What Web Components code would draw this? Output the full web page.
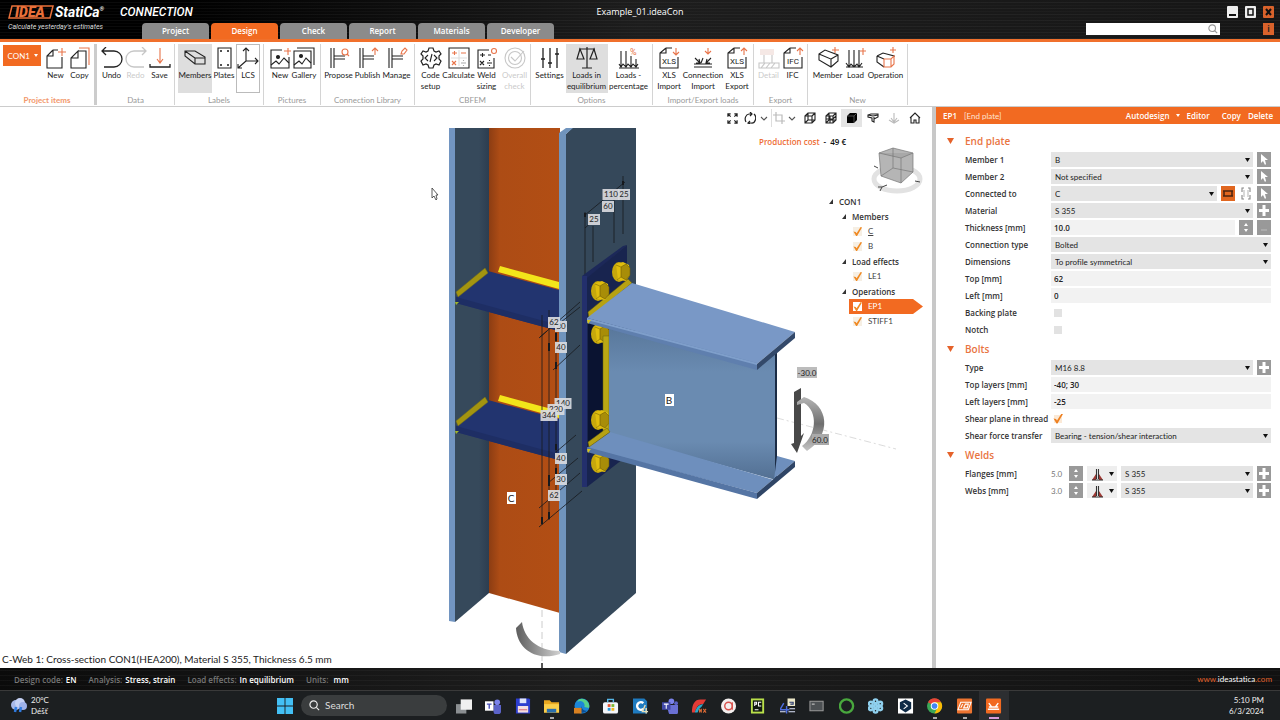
<!DOCTYPE html>
<html lang="en">
<head>
<meta charset="utf-8">
<title>Example_01.ideaCon</title>
<style>
html,body{margin:0;height:100%}
body{font-family:"Open Sans","Noto Sans",sans-serif;font-size:8px;color:#222;background:#fff;font-variant-ligatures:none;--light:Lato,"Open Sans",sans-serif}
</style>
</head>
<body>
<idea-app></idea-app>
<script>
const svg=(name,w,h=w,box=`0 0 ${w} ${h}`)=>`<svg width="${w}" height="${h}" viewBox="${box}" fill="none" stroke="currentColor" stroke-width="1.1" aria-hidden="true">${ICONS[name]||''}</svg>`;
const O='#e8744a';
const box3='<path d="M2 7L8 3L21 8V14L14 20L2 13ZM2 7L14 12V20M14 12L21 8"/>';
const sec='<path d="M3 1V21M6 1V21M6 9H17M6 12H17"/>';
const xls=`<path d="M8 1H14M8 1L2 6V21H20V10M8 1V6H2"/><text x="11" y="17" text-anchor="middle" font-size="8" fill="currentColor" stroke="none" font-family="Roboto">`;
const load='<path d="M4 3V19M9 3V19M14 3V19M1 16L4 20L6 17L9 20L12 17L14 20L17 16M1 20H18"/>';
const ICONS={
 new:`<path d="M8 3H13M8 3L2 9V21H17V10M8 3V9H2"/><path stroke="${O}" d="M17 1V9M13 5H21"/>`,
 copy:`<path d="M9 4H17V21H2V11L9 4V11H2"/><path stroke="${O}" d="M10 1H20V18"/>`,
 undo:'<path d="M1 4H13A8 8 0 0 1 13 20H3M5 0L1 4L5 8" stroke-width="1.3"/>',
 redo:'<path d="M21 4H9A8 8 0 0 0 9 20H19M17 0L21 4L17 8" stroke-width="1.3"/>',
 save:`<path d="M1 17V20H21V17" stroke-width="1.3"/><path stroke="${O}" d="M11 1V15M8 12L11 16L14 12"/>`,
 members:'<path d="M1 4H11L21 10V17H11L1 9ZM1 4L11 11V17M11 11H21"/>',
 plates:'<path d="M5 1H18V21H5Z"/><path d="M7 4H9M14 4H16M7 18H9M14 18H16M8 3V5M15 3V5M8 17V19M15 17V19"/>',
 lcs:'<path d="M9 14V1M9 14H21M9 14L1 21M6 4L9 1L12 4M18 11L21 14L18 17M1 17V21H5"/>',
 picnew:`<path d="M13 3H2V21H20V10"/><circle cx="9" cy="10" r="1.5" fill="currentColor"/><path d="M2 18L7 14L10 17L15 11L20 16"/><path stroke="${O}" d="M19 1V8M15 4H22"/>`,
 gallery:'<path d="M1 4H18V21H1ZM4 1H21V18"/><circle cx="8" cy="9" r="1.5" fill="currentColor"/><path d="M1 18L6 14L9 17L13 11L18 16"/>',
 propose:sec+`<circle cx="17" cy="5" r="3" stroke="${O}"/><path stroke="${O}" d="M19 7L21 9"/>`,
 publish:sec+`<path stroke="${O}" d="M18 8V1M15 4L18 1L21 4"/>`,
 manage:sec+`<path stroke="${O}" d="M15 7L16 4L19 1L21 3L18 7Z"/>`,
 gear:'<path stroke-width="1.2" d="M9 1H13L14 4L16 5L19 4L21 7L19 9V12L21 14L19 18L16 17L14 18L13 21H9L8 18L6 17L3 18L1 14L3 12V9L1 7L3 4L6 5L8 4Z"/><path d="M8 8L5 11L8 14M14 8L17 11L14 14M12 7L10 15"/>',
 calc:`<path d="M1 1H21V21H1Z"/><path stroke="${O}" d="M4 6H9M6.500 4V8M13 6H18M4 14L8 18M8 14L4 18"/><path stroke="#aaa" d="M13 16H18M15.500 13V14M15.500 18V19"/><path stroke="#ddd" d="M11 3V19M3 11H19"/>`,
 weld:`<path d="M13 3H2V21H18V11"/><path d="M4 8H9M6.500 6V10M12 8H15M4 14L8 18M8 14L4 18M11 16H16M13.500 13V14M13.500 18V19"/><circle cx="18" cy="4" r="2.500" stroke="${O}"/>`,
 overall:'<circle cx="11" cy="11" r="10"/><circle cx="11" cy="11" r="6.500"/><path d="M7 10L11 14L20 4"/>',
 sliders:'<path d="M4 1V21M11 1V21M18 1V21" stroke-width="1.3"/><path d="M2 12H6M9 16H13M16 7H20" stroke-width="1.5"/>',
 scales:'<path d="M11 0V21M6 21H16M3 2H19M4 2L1 12H8ZM18 2L14 12H21Z" stroke-width="1.2"/>',
 percent:`<path d="M3 4V19M8 4V19M13 9V19M18 12V19M1 17L3 20L5 17L8 20L10 17L13 20L15 17L18 20L20 17M1 21H21"/><text x="12" y="8" font-size="9" fill="${O}" stroke="none" font-family="Roboto">%</text>`,
 xlsin:xls+`XLS</text><path stroke="${O}" d="M18 1V8M15 5L18 8L21 5"/>`,
 xlsout:xls+`XLS</text><path stroke="${O}" d="M18 8V1M15 4L18 1L21 4"/>`,
 ifc:xls+`IFC</text><path stroke="${O}" d="M18 8V1M15 4L18 1L21 4"/>`,
 conn:`<path d="M2 17H20M2 20H20M3 11L8 16M19 11L14 16M11 11L9 16M7 12L8 16H4M15 12L14 16H18"/><path stroke="${O}" d="M16 1V7M13 4L16 7L19 4"/>`,
 detail:'<path fill="#d9a79a" stroke="none" d="M2 2H16V8H2Z"/><path d="M6 8V16M14 8V16M1 16H21V21H1ZM3 21L7 16M8 21L12 16M13 21L17 16"/>',
 member:box3+`<path stroke="${O}" d="M18 0V6M15 3H22"/>`,
 load:load+`<path stroke="${O}" d="M18 1V8M15 4H21"/>`,
 operation:`<path d="M2 9L8 6L19 9V10M2 9V15L9 20M2 9L9 12"/><path stroke="${O}" d="M9 12H16L19 9V17L16 20H9ZM16 12V20M18 0V6M15 3H21"/>`,
 expand:'<path stroke-width="1.300" d="M1 4V1H4M8 1H11V4M11 8V11H8M4 11H1V8M1 1L4 4M11 1L8 4M11 11L8 8M1 11L4 8"/>',
 rotate:'<path stroke-width="1.200" d="M2 10A4 5 0 0 1 5 2H8M6 0L8 2L6 4M10 2A4 5 0 0 1 7 11H4M6 9L4 11L6 12"/>',
 chev:'<path stroke="#555" d="M3 5L6 8L9 5"/>',
 crop:'<path stroke-width="1.200" d="M3 0V9H12M0 3H9V12"/>',
 wire:'<path d="M1 4L4 1H11V8L8 11H1ZM1 4H8V11M8 4L11 1M4 1V8L1 11M4 8H11"/>',
 wire2:'<path d="M1 4L4 1H11V8L8 11H1ZM1 4H8V11M8 4L11 1M4 1V8L1 11M4 8H11M1 7L8 7L11 4M5 4V11"/>',
 solid:'<path fill="#000" stroke="none" d="M1 4L4 1H11V8L8 11H1Z"/><path stroke="#999" stroke-width=".5" d="M1 4H8V11M8 4L11 1"/>',
 beam:'<path d="M1 3L4 2H11V5L7 7V10L5 9V6L1 5ZM1 3L6 4L11 3M7 7V5"/>',
 ghost:'<path d="M6 1V10M3 6L6 10L9 6M1 8L6 11L11 8"/>',
 home:'<path d="M1 6L6 1L11 6M2 5V11H5V8H7V11H10V5"/>',
 pick:'<rect width="14" height="15" fill="#999" stroke="none"/><path fill="#fff" stroke="none" d="M4 2V11L6 9L8 13L9 12L8 8H11Z"/>',
 plus:'<rect width="14" height="15" fill="#999" stroke="none"/><path stroke="#fff" stroke-width="3" d="M7 2V13M2 7.500H12"/>',
 spin:'<rect width="14" height="15" fill="#999" stroke="none"/><path fill="#fff" stroke="none" d="M7 3L9 6H5ZM7 12L9 9H5Z"/>',
 minus:'<rect width="14" height="15" fill="#999" stroke="none"/><path stroke="#bbb" d="M4 10H10"/>',
 flat:'<rect width="14" height="15" fill="#e0661f" stroke="none"/><path stroke="#4a2410" stroke-width="1.500" d="M2 5H12M2 10H12M3 5V10M11 5V10"/>',
 tall:'<path stroke="#888" d="M5 2H3V6M3 9V13H5M9 2H11V6M11 9V13H9"/><path stroke="#bbb" d="M5 4V11M9 4V11"/>',
 fillet:'<path fill="#a03a35" stroke="none" d="M1 13L5 7V13ZM12 13L8 7V13Z"/><path stroke="#333" d="M5.500 2V12M7.500 2V12M1 13H12"/>',
 tri:'<path fill="#111" stroke="none" d="M0 0H5L2.500 4Z"/>',
 win:'<g stroke="none" fill="#43c0f5"><path d="M0 0H8V8H0ZM9 0H17V8H9ZM0 9H8V17H0ZM9 9H17V17H9Z"/></g>',
 lens:'<circle cx="5" cy="5" r="4" stroke-width="1.300"/><path stroke-width="1.300" d="M8 8L11 11"/>',
 rain:'<g stroke="none"><circle cx="6" cy="8" r="5" fill="#a9b9e8"/><circle cx="10" cy="6" r="5" fill="#c6d2f5"/><circle cx="13" cy="9" r="4" fill="#9fb2ea"/></g><path stroke="#2f7be0" stroke-width="2.500" d="M6 10L5 15M11 10L10 15"/>',
 view:'<path stroke="none" fill="#8b8f92" d="M0 6H11V16H0Z"/><path stroke="none" fill="#f0f0f0" d="M5 1H17V12H5Z"/>',
 teams:'<g stroke="none"><circle cx="13" cy="4" r="3" fill="#7b83eb"/><path fill="#5b63c8" d="M9 7H17V12A4 4 0 0 1 9 14Z"/><path fill="#fff" d="M0 3H9V13H0Z"/></g><path stroke="#4b53bc" stroke-width="1.500" d="M2 6H7M4.500 6V11"/>',
 floppy:'<g stroke="none"><path fill="#2d3ecf" d="M1 0H15L16 1V16H1Z"/><path fill="#dfe4fa" d="M5 0H12V5H5Z"/><path fill="#f4dfe2" d="M3 8H14V15H3Z"/></g><path stroke="#d56a7a" d="M4 12H13"/>',
 folder:'<g stroke="none"><path fill="#e9a820" d="M0 2H6L8 4H16V15H0Z"/><path fill="#fbcf4b" d="M0 6H16V15H0Z"/><path fill="#2a6fae" d="M3 11H13V15H3Z"/></g>',
 edge:'<g stroke="none"><circle cx="8.500" cy="8" r="8" fill="#1c86d8"/><path fill="#55d08c" d="M5 1A8 8 0 0 1 16 10L11 9A4 4 0 0 0 2 6Z"/><path fill="#0c4d92" d="M8 8A5 5 0 0 0 14 13A8 8 0 0 1 7 15Z"/><path fill="#d98121" d="M0 10H8V16H0Z"/></g>',
 store:'<rect x="0" y="4" width="16" height="12" rx="2" fill="#f3f6fa" stroke="none"/><path stroke="#57b7e8" stroke-width="1.500" d="M5 4V1H11V4"/><g stroke="none"><path fill="#e9532f" d="M5 6H8V9H5Z"/><path fill="#7db82e" d="M9 6H12V9H9Z"/><path fill="#2698dc" d="M5 10H8V13H5Z"/><path fill="#f3b51b" d="M9 10H12V13H9Z"/></g>',
 cc:'<path stroke="none" fill="#1f7bc0" d="M0 0H12L15 3V16H0Z"/><path stroke="#fff" stroke-width="2.500" d="M11 5A4 4 0 1 0 11 11"/><path stroke="#e4ddb8" stroke-width="1.500" d="M13 7L10 14H16M14 10V16"/>',
 teams2:'<g stroke="none"><circle cx="10" cy="3" r="3" fill="#7b83eb"/><circle cx="15" cy="5" r="2" fill="#5b63c8"/><path fill="#6a70d4" d="M5 7H17V12A5 5 0 0 1 7 15Z"/><path fill="#4048a8" d="M0 4H9V12H0Z"/></g><path stroke="#fff" d="M2 6H7M4.500 6V11"/>',
 rx:'<path fill="#e33b36" stroke="none" d="M1 15C1 6 4 1 10 1H16L13 6C8 6 6 9 4 15Z"/><path fill="#2ba9c9" stroke="none" d="M4 15C6 9 8 7 13 6L11 9C9 10 8 12 7 15Z"/><path stroke="#d96a35" d="M9 11V15M9 11L11 15V11M13 11L16 15M16 11L13 15"/>',
 aa:'<circle cx="8" cy="8" r="8" fill="#f3efee" stroke="none"/><circle cx="8" cy="8" r="4" stroke="#d8504b" stroke-width="1.500"/><path stroke="#d8504b" stroke-width="1.300" d="M12 4V12"/>',
 pc:'<path stroke="none" fill="#b9e04b" d="M1 0H15V16H1Z"/><path stroke="none" fill="#10180f" d="M3 2H13V14H3Z"/><path stroke="#fff" d="M5 8V4H7V6H5M12 4H9V8H12M5 12H9"/>',
 num:'<path stroke="none" fill="#ece8c8" d="M8 0H16V8H8Z"/><path stroke="#4d6de0" stroke-width="1.500" d="M4 5L0 12H10M7 8V16"/><path stroke="#dfe8ff" d="M0 14H6M9 14H16M10 11H16"/><path stroke="#26356f" d="M10 4H14V6H11"/>',
 term:'<path stroke="#9a9a9a" fill="#4c5053" d="M1 3H15V13H1Z"/><path stroke="#cfcfcf" d="M3 6H6"/>',
 ring:'<circle cx="8" cy="8" r="7" stroke="#49a83e" stroke-width="2.500"/>',
 flower:'<g stroke="#8fd0ee" stroke-width="2.500"><circle cx="8" cy="3" r="2"/><circle cx="8" cy="13" r="2"/><circle cx="3" cy="5.500" r="2"/><circle cx="13" cy="5.500" r="2"/><circle cx="3" cy="10.500" r="2"/><circle cx="13" cy="10.500" r="2"/><circle cx="8" cy="8" r="1.500"/></g>',
 deepl:'<path stroke="none" fill="#fff" d="M0 0H16V16H0Z"/><path stroke="none" fill="#0f2b46" d="M8 1L14 4V11L8 15L2 11V4Z"/><path stroke="#fff" d="M6 5L10 8L6 11"/>',
 chrome:'<g stroke="none"><circle cx="8" cy="8" r="8" fill="#3aa757"/><path fill="#ea4335" d="M8 8L1 4A8 8 0 0 1 15 4L8 4Z"/><path fill="#fbbc05" d="M8 4H15A8 8 0 0 1 8 16L11 10Z"/><circle cx="8" cy="8" r="4" fill="#fff"/><circle cx="8" cy="8" r="3" fill="#4285f4"/></g>',
 idea:'<rect width="16" height="16" rx="1" fill="#ec7430" stroke="none"/><path stroke="#fff" d="M4 4H15L12 12H1ZM6 6L4 10M9 6H12L11 10H7Z"/>',
 ideacon:'<rect width="16" height="16" rx="1" fill="#f26a21" stroke="none"/><path stroke="#fff" stroke-width="1.500" d="M3 5L6 9M13 5L10 9M2 11.500H14M3 9H13"/>'
};
const define=(tag,css,html)=>customElements.define(tag,class extends HTMLElement{
  connectedCallback(){
    if(this.shadowRoot)return;
    const t=document.createElement('template');
    t.innerHTML=`<style>*{box-sizing:border-box}button,input,select{font:inherit;color:inherit;border:0;margin:0;padding:0;background:none;border-radius:0;min-width:0}svg{display:block;flex:none}${css}</style>${typeof html==='function'?html(this):html}`;
    this.attachShadow({mode:'open'}).append(t.content.cloneNode(true));
  }
});

/* ---------- header ---------- */
define('idea-header',`
:host{display:block;color:#fff;border-bottom:3px solid #f0702c;
 background:repeating-linear-gradient(#0000 0 2px,#ffffff0b 2px 3px,#0000 3px 5px,#ffffff06 5px 6px),linear-gradient(90deg,#000 0 14%,#1d1d1d 50%,#161616)}
.row{display:grid;grid-template-columns:142px 1fr 142px;height:39px;position:relative}
.brand svg{overflow:visible}
.title{position:absolute;left:0;right:0;top:6px;text-align:center;font-size:9px;line-height:12px}
nav{display:flex;gap:2px;margin-top:auto}
nav button{width:67px;height:16px;border-radius:4px 4px 0 0;background:#8b8b8b;color:#fff;font-weight:600;font-size:8px;line-height:16px}
nav button[aria-selected=true]{background:#f26a21}
.right{position:absolute;right:6px;top:6px;display:flex;flex-direction:column;gap:5px;align-items:flex-end}
.win{display:flex;gap:7px}
.win button{width:11px;height:12px;background:#eee;display:grid;place-items:center;color:#111;border-radius:1px}
.win button.x,.info{background:#d9622b}
.find{display:flex;gap:43px}
.find label{display:flex;width:134px;height:12px;background:#fff;align-items:center;color:#999;padding-right:2px}
.find input{flex:1}
.info{width:11px;height:12px;color:#222;font-weight:700;line-height:12px}`,`
<div class="row">
 <div class="brand"><svg width="142" height="39" viewBox="0 0 142 39" font-family="Roboto" font-style="italic" font-weight="700">
  <path d="M12 6H53L50 18H9Z" fill="none" stroke="#e8703a" stroke-width="1.500"/>
  <text x="15" y="17" font-size="14" font-weight="900" fill="#e8703a">IDEA</text>
  <text x="55" y="17" font-size="14" fill="#fff">StatiCa<tspan font-size="6" dy="-6">®</tspan></text>
  <text x="120" y="16" font-size="12" fill="#fff" font-weight="500">CONNECTION</text>
  <text x="8" y="29" font-size="7" fill="#ddd" font-weight="400">Calculate yesterday's estimates</text></svg></div>
 <nav role="tablist"><button role="tab">Project</button><button role="tab" aria-selected="true">Design</button><button role="tab">Check</button><button role="tab">Report</button><button role="tab">Materials</button><button role="tab">Developer</button></nav>
 <div class="title">Example_01.ideaCon</div>
 <div class="right">
  <div class="win"><button aria-label="Minimize"><svg width="7" height="8" stroke="currentColor" stroke-width="2"><path d="M0 7H7"/></svg></button><button aria-label="Maximize"><svg width="7" height="8" fill="none" stroke="currentColor" stroke-width="1.500"><path d="M1 1H6V7H1Z"/></svg></button><button class="x" aria-label="Close"><svg width="7" height="8" stroke="currentColor" stroke-width="2"><path d="M1 1L6 7M6 1L1 7"/></svg></button></div>
  <div class="find"><label>
   <input aria-label="Search commands">${svg('lens',10,10,'0 0 12 12')}</label><button class="info" aria-label="About">i</button></div>
 </div>
</div>`);

/* ---------- ribbon ---------- */
define('ribbon-button',`
:host{display:block;flex:none;width:var(--w,24px)}
button{display:flex;flex-direction:column;align-items:center;width:100%;height:49px;padding-top:3px;font-family:var(--light);line-height:11px;font-size:8px;white-space:nowrap;color:#222}
svg{margin-bottom:1px}
.t{text-align:center}
:host([selected]) button{background:#dedede}
:host([framed]) button{outline:1px solid #bbb;outline-offset:-1px}
:host([disabled]) button{opacity:.25}`,
e=>`<button ${e.hasAttribute('disabled')?'disabled':''}>${svg(e.getAttribute('icon'),22)}<span class="t"><slot></slot></span></button>`);
define('ribbon-group',`
:host{display:flex;flex-direction:column;justify-content:space-between;width:var(--g);border-right:1px solid #d4d4d4;height:61px;flex:none}
.b{display:flex;justify-content:center}
.n{text-align:center;color:#999;line-height:10px;font-size:8px;font-family:var(--light)}
:host([main]){border-right:3px solid #ccc}
:host([main]) .n{color:#f2986b;font-weight:700}`,
e=>`<div class="b"><slot></slot></div><div class="n">${e.getAttribute('name')}</div>`);
define('idea-ribbon',`
:host{display:block;border-bottom:1px solid #ccc;background:#fff;height:65px;padding-top:2px;overflow:hidden}
.r{display:flex}
.con{width:38px;height:21px;margin:1px 3px 0 0;background:#f26a21;color:#fff;display:flex;justify-content:space-between;align-items:center;padding:0 3px 0 5px;font-size:8px;font-family:var(--light)}
.w28{--w:28px}.w29{--w:29px}.w32{--w:32px}.w34{--w:34px}.w36{--w:36px}.w42{--w:42px}.w22{--w:22px}.w38{--w:38px}`,`
<div class="r">
<ribbon-group main name="Project items" style="--g:97px"><button class="con"><span>CON1</span><svg width="4" height="3" fill="#fff"><path d="M0 0H4L2 3Z"/></svg></button><ribbon-button icon="new">New</ribbon-button><ribbon-button icon="copy">Copy</ribbon-button></ribbon-group>
<ribbon-group name="Data" style="--g:78px"><ribbon-button icon="undo">Undo</ribbon-button><ribbon-button icon="redo" disabled>Redo</ribbon-button><ribbon-button icon="save">Save</ribbon-button></ribbon-group>
<ribbon-group name="Labels" style="--g:89px"><ribbon-button class="w34" selected icon="members">Members</ribbon-button><ribbon-button icon="plates">Plates</ribbon-button><ribbon-button framed icon="lcs">LCS</ribbon-button></ribbon-group>
<ribbon-group name="Pictures" style="--g:57px"><ribbon-button icon="picnew">New</ribbon-button><ribbon-button icon="gallery">Gallery</ribbon-button></ribbon-group>
<ribbon-group name="Connection Library" style="--g:94px"><ribbon-button class="w29" icon="propose">Propose</ribbon-button><ribbon-button class="w29" icon="publish">Publish</ribbon-button><ribbon-button class="w29" icon="manage">Manage</ribbon-button></ribbon-group>
<ribbon-group name="CBFEM" style="--g:116px"><ribbon-button class="w28" icon="gear">Code<br>setup</ribbon-button><ribbon-button class="w28" icon="calc">Calculate</ribbon-button><ribbon-button class="w28" icon="weld">Weld<br>sizing</ribbon-button><ribbon-button class="w28" disabled icon="overall">Overall<br>check</ribbon-button></ribbon-group>
<ribbon-group name="Options" style="--g:122px"><ribbon-button class="w32" icon="sliders">Settings</ribbon-button><ribbon-button class="w42" selected icon="scales">Loads in<br>equilibrium</ribbon-button><ribbon-button class="w42" icon="percent">Loads -<br>percentage</ribbon-button></ribbon-group>
<ribbon-group name="Import/Export loads" style="--g:101px"><ribbon-button class="w32" icon="xlsin">XLS<br>Import</ribbon-button><ribbon-button class="w36" icon="conn">Connection<br>Import</ribbon-button><ribbon-button class="w32" icon="xlsout">XLS<br>Export</ribbon-button></ribbon-group>
<ribbon-group name="Export" style="--g:54px"><ribbon-button disabled icon="detail">Detail</ribbon-button><ribbon-button icon="ifc">IFC</ribbon-button></ribbon-group>
<ribbon-group name="New" style="--g:100px"><ribbon-button class="w34" icon="member">Member</ribbon-button><ribbon-button class="w22" icon="load">Load</ribbon-button><ribbon-button class="w38" icon="operation">Operation</ribbon-button></ribbon-group>
</div>`);

/* ---------- 3D scene ---------- */
const bolt=(x,y)=>`<g transform="translate(${x} ${y})"><ellipse cx="-2" cy="0" rx="7" ry="10" fill="#c7a80c"/><path d="M-5 -8L2 -10L8 -7L9 3L5 9L-3 8Z" fill="#e0bd0d"/><path d="M0 -5L5 -8L9 -4V3L5 8L0 5Z" fill="#a88d08" stroke="#6e5c06" stroke-width=".6"/><path d="M0 -5L-5 -7M0 5L-4 8" stroke="#8b7607" stroke-width=".7"/></g>`;
const dim=(x,y,t)=>{const w=t.length*5+2;return `<rect x="${x-w/2}" y="${y-5}" width="${w}" height="11" fill="#d9dade" opacity=".92"/><text x="${x}" y="${y+3}" text-anchor="middle">${t}</text>`};
const stiff=y=>`<g transform="translate(0 ${y})"><path fill="#22346f" d="M456 28L488 2L559 21V62L456 34Z"/><path fill="#1e2e64" d="M456 28L559 56V62L456 34Z"/><path fill="#a39410" stroke="#6e6a1c" stroke-width=".5" d="M456 23L485 -1L488 4L458 28Z"/><path fill="#f3e51a" d="M500 -3L559 13V20L498 3Z"/><path fill="#9fb52a" d="M455 33H459L456 36Z"/></g>`;
define('model-view',`:host{display:block}svg{width:100%;height:100%}`,`
<svg viewBox="0 107 932 561" preserveAspectRatio="xMidYMid meet" font-family="Lato,sans-serif" font-size="8">
<defs>
 <linearGradient id="web" x1="0" x2="1"><stop offset="0" stop-color="#8c3d13"/><stop offset=".15" stop-color="#ad4c15"/><stop offset="1" stop-color="#b24e14"/></linearGradient>
 <linearGradient id="bw" x1="0" y1="0" x2="0" y2="1"><stop offset="0" stop-color="#58779a"/><stop offset=".3" stop-color="#6a8bb1"/><stop offset=".75" stop-color="#6a8bb1"/><stop offset="1" stop-color="#526f92"/></linearGradient>
 <linearGradient id="fl" x1="0" x2="1"><stop offset="0" stop-color="#36495b"/><stop offset=".7" stop-color="#36495b"/><stop offset="1" stop-color="#2c3d50"/></linearGradient>
 <linearGradient id="gr" x1="0" x2="0" y1="0" y2="1"><stop offset="0" stop-color="#b5b5b5"/><stop offset=".5" stop-color="#6f6f6f"/><stop offset="1" stop-color="#c4c4c4"/></linearGradient>
 <linearGradient id="gr2" x1="0" x2="1"><stop offset="0" stop-color="#5d5d5d"/><stop offset="1" stop-color="#d0d0d0"/></linearGradient>
</defs>
<path fill="url(#web)" d="M489 128H560V613L489 593Z"/>
<path fill="url(#fl)" d="M455 128H489V593L455 622Z"/>
<path fill="#7295c1" d="M449 128H455V622L449 621Z"/>
${stiff(269)}${stiff(398)}
<path fill="#35485a" d="M566 134L572 128H636V593L566 654Z"/>
<path fill="#7094bd" d="M559 133L566 128H573L566 134V654L559 652Z"/>
<g stroke="#17191d" stroke-width=".8" fill="none">
 <path d="M542 315V525M549 310V520M556 330V490M585 212V277M593 226V262M614 192V243M623 176V234M585 228L594 220M585 215L625 182"/>
 <path d="M539 338L580 302M540 337L547 331M556 326L580 307M553 370L580 345M556 452L576 435M548 483L578 458M539 508L580 473M539 527L582 491"/>
 <path stroke-width="2" d="M542 517V524M549 343V351M549 475V486M549 512V519M556 333V341M556 362V369M556 444V450M556 468V474M585 213V217M623 181V185"/>
</g>
<path fill="#1c2859" d="M582 276L623 246L627 245L587 279V487H582Z"/>
<path fill="#18244f" d="M587 278L627 245V456L587 487Z"/>
<path fill="#232f6c" d="M582 276H587V487H582Z"/>
<path fill="#0a1331" d="M588 322L606 330V438L588 446Z"/>
<path fill="#b7a212" stroke="#655c0d" stroke-width=".5" d="M588 312L628 279L632 283L589 318Z"/>
${bolt(621,272)}${bolt(600,291)}${bolt(600,334)}
<path fill="#bba814" stroke="#6d640c" stroke-width=".5" d="M603 336H609V432H603Z"/>
${bolt(600,420)}${bolt(600,463)}
<path fill="url(#bw)" d="M609 326L758 368L776 352V480L609 434Z"/>
<path fill="#1b2c45" d="M775 353L777 351V480L775 479Z"/>
<path fill="#7998c6" d="M632 283L795 332L757 364L587 318Z"/>
<path fill="#5f7fae" d="M587 318L757 363V370L587 323Z"/>
<path fill="#7f9fcb" d="M587 318L757 363V365L587 320Z"/>
<path fill="#33496a" d="M757 364L795 332V338L757 370Z"/>
<path fill="#6e8fbd" d="M587 448L610 432L774 480L777 456L795 461L757 493Z"/>
<path fill="#5575a4" d="M587 447L757 493V499L587 452Z"/>
<path fill="#2f4566" d="M757 493L795 461V467L757 499Z"/>
<path fill="#b7a212" stroke="#655c0d" stroke-width=".5" d="M588 442L607 428L610 432L589 447Z"/>
<path fill="#d8c31a" d="M587 320H591L588 324ZM587 449H591L588 453Z"/>
<g fill="#222">${dim(624,194,'25')}${dim(611,194,'110')}${dim(608,206,'60')}${dim(594,219,'25')}${dim(561,326,'30')}${dim(554,322,'62')}${dim(561,347,'40')}${dim(563,403,'140')}${dim(556,409,'220')}${dim(549,415,'344')}${dim(561,458,'40')}${dim(561,479,'30')}${dim(554,495,'62')}</g>
<path d="M777 418L896 449" stroke="#ccc" stroke-width=".7" stroke-dasharray="7 3 2 3"/>
<path d="M542 610V668" stroke="#ccc" stroke-dasharray="7 4"/>
<path d="M542 663V668" stroke="#555" stroke-width="2"/>
<path fill="url(#gr2)" d="M516 628L522 622C524 638 537 651 560 651V654C535 662 517 648 516 628Z"/>
<path fill="#484848" d="M794 392L801 388V436L804 433L797 453L791 444L794 443Z"/>
<path fill="url(#gr)" d="M797 402L804 397C829 405 832 435 807 451L802 446C816 436 819 412 804 403L797 405Z"/>
<g fill="#222"><rect x="797" y="367" width="20" height="11" fill="#bcbcbc"/><text x="807" y="376" text-anchor="middle">-30.0</text><rect x="812" y="434" width="17" height="11" fill="#aaa"/><text x="820" y="443" text-anchor="middle">60.0</text></g>
<g font-size="10" fill="#222"><rect x="507" y="492" width="9" height="12" fill="#fff"/><text x="511" y="502" text-anchor="middle">C</text><rect x="665" y="394" width="9" height="12" fill="#fff"/><text x="669" y="404" text-anchor="middle">B</text></g>
<path d="M432 188V198L434 196L436 200L437 199L436 195H438Z" fill="#fff" stroke="#333" stroke-width=".8"/>
</svg>`);

/* ---------- scene tree ---------- */
define('tree-item',`
:host{display:flex;align-items:center;height:15px;line-height:15px;font-size:8px;font-family:var(--light);color:#444}
:host([level="0"]),:host([level="1"]){font-weight:600;color:#333;font-size:8px;font-family:inherit}
:host([level="1"]){padding-left:13px}:host([level="2"]){padding-left:22px}
.a{width:12px}
label{display:flex;align-items:center;gap:6px;padding:0 4px;flex:1}
input{appearance:none;width:9px;height:9px;background:#f6efe4;position:relative}
input:checked::after{content:"";position:absolute;inset:0;background:#f08a24;clip-path:polygon(5% 50%,30% 55%,40% 70%,85% 0,100% 5%,45% 100%,35% 100%)}
:host([selected]) label{background:#f26a21;color:#fff;clip-path:polygon(0 0,calc(100% - 10px) 0,100% 50%,calc(100% - 10px) 100%,0 100%)}
:host([selected]) input{background:#fff}`,
e=>e.getAttribute('level')=='2'?`<label><input type="checkbox" checked><span><slot></slot></span></label>`:`<svg class="a" width="13" height="5"><path d="M2 5H6V0Z" fill="#333"/></svg><slot></slot>`);

define('idea-viewport',`
:host{display:block;position:relative;background:#fff;min-width:0;overflow:hidden}
model-view{position:absolute;inset:0}
.bar{position:absolute;top:2px;right:7px;display:flex}
.bar button{width:21px;height:18px;display:grid;place-items:center;color:#222}
.bar .s{width:14px}
.bar .on{background:#e4e4e4}
.bar .off{color:#bbb}
.bar .sep{border-left:1px solid #ddd}
.cost{position:absolute;top:29px;right:86px;font-weight:600;font-size:8px;line-height:12px;color:#111;display:flex;gap:4px}
.cost b{color:#ee6c33;font-weight:600}
.cube{position:absolute;top:38px;right:9px}
tree-item{width:96px}
.tree{position:absolute;top:87px;right:9px;display:flex;flex-direction:column}
.info{position:absolute;left:2px;bottom:2px;font-size:10px;line-height:14px;color:#222;font-family:var(--light)}`,`
<model-view></model-view>
<div class="bar"><button aria-label="Fit">${svg('expand',11,11,'0 0 12 12')}</button><button class="s" aria-label="Rotate">${svg('rotate',12)}</button><button class="s" aria-label="Rotate options">${svg('chev',12)}</button><button class="s off sep" aria-label="Clip">${svg('crop',12)}</button><button class="s" aria-label="Clip options">${svg('chev',12)}</button><button aria-label="Wireframe">${svg('wire',12)}</button><button aria-label="Transparent">${svg('wire2',12)}</button><button class="on" aria-label="Solid">${svg('solid',12)}</button><button aria-label="Members">${svg('beam',12)}</button><button class="off" aria-label="Loads">${svg('ghost',12)}</button><button aria-label="Home view">${svg('home',12)}</button></div>
<div class="cost"><b>Production cost</b><span>-</span><span>49 €</span></div>
<svg class="cube" width="54" height="50"><ellipse cx="28" cy="34" rx="23" ry="12" fill="none" stroke="#e2e2e2" stroke-width="5"/><g stroke="#777" stroke-width=".7"><path fill="#b5b5b5" d="M10 8L24 3L44 8V27L32 38L12 31Z"/><path fill="#a8a8a8" d="M10 8L32 13L44 8M32 13V38"/><path fill="none" d="M24 3V23L12 31M24 23L44 27"/></g><path d="M9 42H13L11 46M13 42L18 40M5 21L9 23M46 36L51 37" stroke="#444" fill="none"/></svg>
<div class="tree" role="tree"><tree-item level="0">CON1</tree-item><tree-item level="1">Members</tree-item><tree-item level="2"><u>C</u></tree-item><tree-item level="2">B</tree-item><tree-item level="1">Load effects</tree-item><tree-item level="2">LE1</tree-item><tree-item level="1">Operations</tree-item><tree-item level="2" selected>EP1</tree-item><tree-item level="2">STIFF1</tree-item></div>
<div class="info">C-Web 1: Cross-section CON1(HEA200), Material S 355, Thickness 6.5 mm</div>`);

/* ---------- property panel ---------- */
const dd=(id,v,cls='')=>`<span class="dd ${cls}"><select ${id?`id="${id}"`:`aria-label="Electrode"`}><option>${v}</option></select>${svg('tri',5,4)}</span>`;
const ib=(n,l)=>`<button class="ib" aria-label="${l}">${svg(n,14,15)}</button>`;
define('prop-row',`
:host{display:grid;grid-template-columns:86px 1fr;height:17px;align-items:center;font-size:8px}
label{font-weight:600;color:#333;white-space:nowrap}
.c{display:flex;align-items:center;gap:4px;height:15px;color:#222;min-width:0}
.dd{display:grid;flex:1;height:15px;background:#e4e4e4;align-items:center;min-width:0}
.dd>*{grid-area:1/1}
.dd>svg:last-child{justify-self:end;margin-right:3px;pointer-events:none}
select{appearance:none;width:100%;height:15px;padding:0 4px;font-family:var(--light);font-size:8px}
.tiny{flex:none;width:30px;background:#eee}
.tiny>svg:nth-child(2){margin-left:4px}
input.t{flex:1;height:15px;background:#f2f2f2;padding:0 3px;font-weight:600}
input.n{width:14px;color:#777;font-family:var(--light);font-size:8px}
.ib{flex:none;display:block}
input[type=checkbox]{appearance:none;width:8px;height:8px;margin-left:3px;background:#e2e2e2;position:relative}
input[type=checkbox]:checked{background:#fbe9d6}
input[type=checkbox]:checked::after{content:"";position:absolute;inset:-1px;background:#ee8122;clip-path:polygon(5% 50%,30% 55%,40% 70%,85% 0,100% 5%,45% 100%,35% 100%)}`,
e=>{const k=e.getAttribute('kind'),v=e.getAttribute('value')||'';
 const c={
  select:()=>dd('c',v), pick:()=>dd('c',v)+ib('pick','Pick in model'), add:()=>dd('c',v)+ib('plus','Add'),
  conn:()=>dd('c',v)+ib('flat','Flange')+ib('tall','Web')+ib('pick','Pick in model'),
  text:()=>`<input class="t" id="c" value="${v}">`,
  num:()=>`<input class="t" id="c" value="${v}">`+ib('spin','Step')+ib('minus','Default'),
  check:()=>`<input type="checkbox" id="c" ${v?'checked':''}>`,
  weld:()=>`<input class="n" id="c" value="${v}">`+ib('spin','Step')+`<span class="dd tiny"><select aria-label="Weld type"><option></option></select>${svg('fillet',13,14)}${svg('tri',5,4)}</span>`+dd('','S 355')+ib('plus','Add')
 }[k]();
 return `<label for="c"><slot></slot></label><div class="c">${c}</div>`});
define('prop-section',`
:host{display:block}
h2{margin:0;font-size:10px;line-height:16px;padding:2px 0 1px;color:#e9743f;font-weight:600;display:flex;align-items:center}
h2 svg{margin:0 11px 0 11px}
.body{padding:1px 9px 1px 29px}`,
e=>`<h2><svg width="7" height="6" fill="#e5622a"><path d="M0 0H7L3.500 6Z"/></svg>${e.getAttribute('name')}</h2><div class="body"><slot></slot></div>`);
define('idea-panel',`
:host{display:block;background:#fff}
header{display:flex;align-items:center;height:17px;background:#f26a21;color:#fff;padding:0 7px;font-size:8px;font-weight:600;gap:7px}
header i{font-style:normal;font-weight:400;color:#ffe3d3;font-family:var(--light);font-size:8px}
header button{font-weight:600;margin-left:5px;display:flex;align-items:center;gap:6px}
header .f{margin-left:auto}
header .l{margin-left:0}
.s{padding-top:7px}`,`
<header><span>EP1</span><i>[End plate]</i><button class="f">Autodesign <svg width="4" height="3" fill="#fff"><path d="M0 0H4L2 3Z"/></svg></button><button class="l">Editor</button><button>Copy</button><button class="l">Delete</button></header>
<div class="s">
<prop-section name="End plate">
<prop-row kind="pick" value="B">Member 1</prop-row><prop-row kind="pick" value="Not specified">Member 2</prop-row><prop-row kind="conn" value="C">Connected to</prop-row><prop-row kind="add" value="S 355">Material</prop-row><prop-row kind="num" value="10.0">Thickness [mm]</prop-row><prop-row kind="select" value="Bolted">Connection type</prop-row><prop-row kind="select" value="To profile symmetrical">Dimensions</prop-row><prop-row kind="text" value="62">Top [mm]</prop-row><prop-row kind="text" value="0">Left [mm]</prop-row><prop-row kind="check">Backing plate</prop-row><prop-row kind="check">Notch</prop-row>
</prop-section>
<prop-section name="Bolts">
<prop-row kind="add" value="M16 8.8">Type</prop-row><prop-row kind="text" value="-40; 30">Top layers [mm]</prop-row><prop-row kind="text" value="-25">Left layers [mm]</prop-row><prop-row kind="check" value="1">Shear plane in thread</prop-row><prop-row kind="select" value="Bearing - tension/shear interaction">Shear force transfer</prop-row>
</prop-section>
<prop-section name="Welds">
<prop-row kind="weld" value="5.0">Flanges [mm]</prop-row><prop-row kind="weld" value="3.0">Webs [mm]</prop-row>
</prop-section></div>`);

/* ---------- bottom bars ---------- */
define('idea-status',`
:host{display:flex;align-items:center;height:23px;padding:0 8px 0 14px;gap:12px;color:#fff;font-size:8px;font-weight:600;border-bottom:1px solid #3a3a3a;
 background:repeating-linear-gradient(#0000 0 2px,#ffffff09 2px 3px,#0000 3px 5px),linear-gradient(90deg,#0b0b0b,#1e1e1e 45%,#111)}
span{color:#777;margin-right:3px}
a{margin-left:auto;color:#e0622c;text-decoration:none;font-weight:400;font-family:var(--light);font-size:8px}a b{font-weight:400;color:#fff}`,`
<div><span>Design code:</span>EN</div><div><span>Analysis:</span>Stress, strain</div><div><span>Load effects:</span>In equilibrium</div><div><span>Units:</span> mm</div><a href="#">www.<b>ideastatica</b>.com</a>`);
define('task-bar',`
:host{display:grid;grid-template-columns:1fr 738px 1fr;align-items:center;height:29px;background:#1c1f21;color:#eee;font-size:8px;font-family:var(--light);line-height:11px}
.w{display:flex;align-items:center;gap:4px;padding-left:10px}
.m{display:flex;align-items:center;height:29px}
.m button{flex:1;height:29px;display:grid;place-items:center;position:relative}
.m .start{flex:none;width:28px}
.m button.on{background:#2c2e31}
.m .run::after{content:"";position:absolute;bottom:1px;left:50%;width:4px;height:2px;margin-left:-2px;background:#aaa}
.m .on::after{content:"";position:absolute;bottom:1px;left:50%;width:10px;height:2px;margin-left:-5px;background:#d99ad9}
.q{flex:none;display:flex;align-items:center;gap:5px;width:146px;height:21px;border-radius:11px;background:#3a3d3e;padding-left:8px;margin:0 2px}
input{width:100px;font-size:10px;outline:0}input::placeholder{color:#ddd;opacity:1}
.t{text-align:right;padding-right:16px}`,`
<div class="w">${svg('rain',17)}<div>20°C<br>Déšť</div></div>
<div class="m"><button class="start" aria-label="Start">${svg('win',16,16,'0 0 17 17')}</button><label class="q">${svg('lens',11,11,'0 0 12 12')}<input placeholder="Search" aria-label="Search"></label>${['view','teams','floppy','folder','edge','store','cc','teams2','rx','aa','pc','num','term','ring','flower','deepl','chrome','idea','ideacon'].map(n=>`<button class="${n=='ideacon'?'on':/folder|chrome|^idea$/.test(n)?'run':''}" aria-label="${n}">${svg(n,16,16,'0 0 17 16')}</button>`).join('')}</div>
<div class="t">5:10 PM<br>6/3/2024</div>`);
define('idea-app',`
:host{display:grid;grid-template-rows:auto auto 1fr auto auto;min-height:100vh}
.main{display:grid;grid-template-columns:minmax(0,1fr) 344px}
idea-viewport{border-right:4px solid #c8c8c8}`,`
<idea-header></idea-header><idea-ribbon></idea-ribbon><div class="main"><idea-viewport></idea-viewport><idea-panel></idea-panel></div><idea-status></idea-status><task-bar></task-bar>`);
</script>
</body>
</html>
